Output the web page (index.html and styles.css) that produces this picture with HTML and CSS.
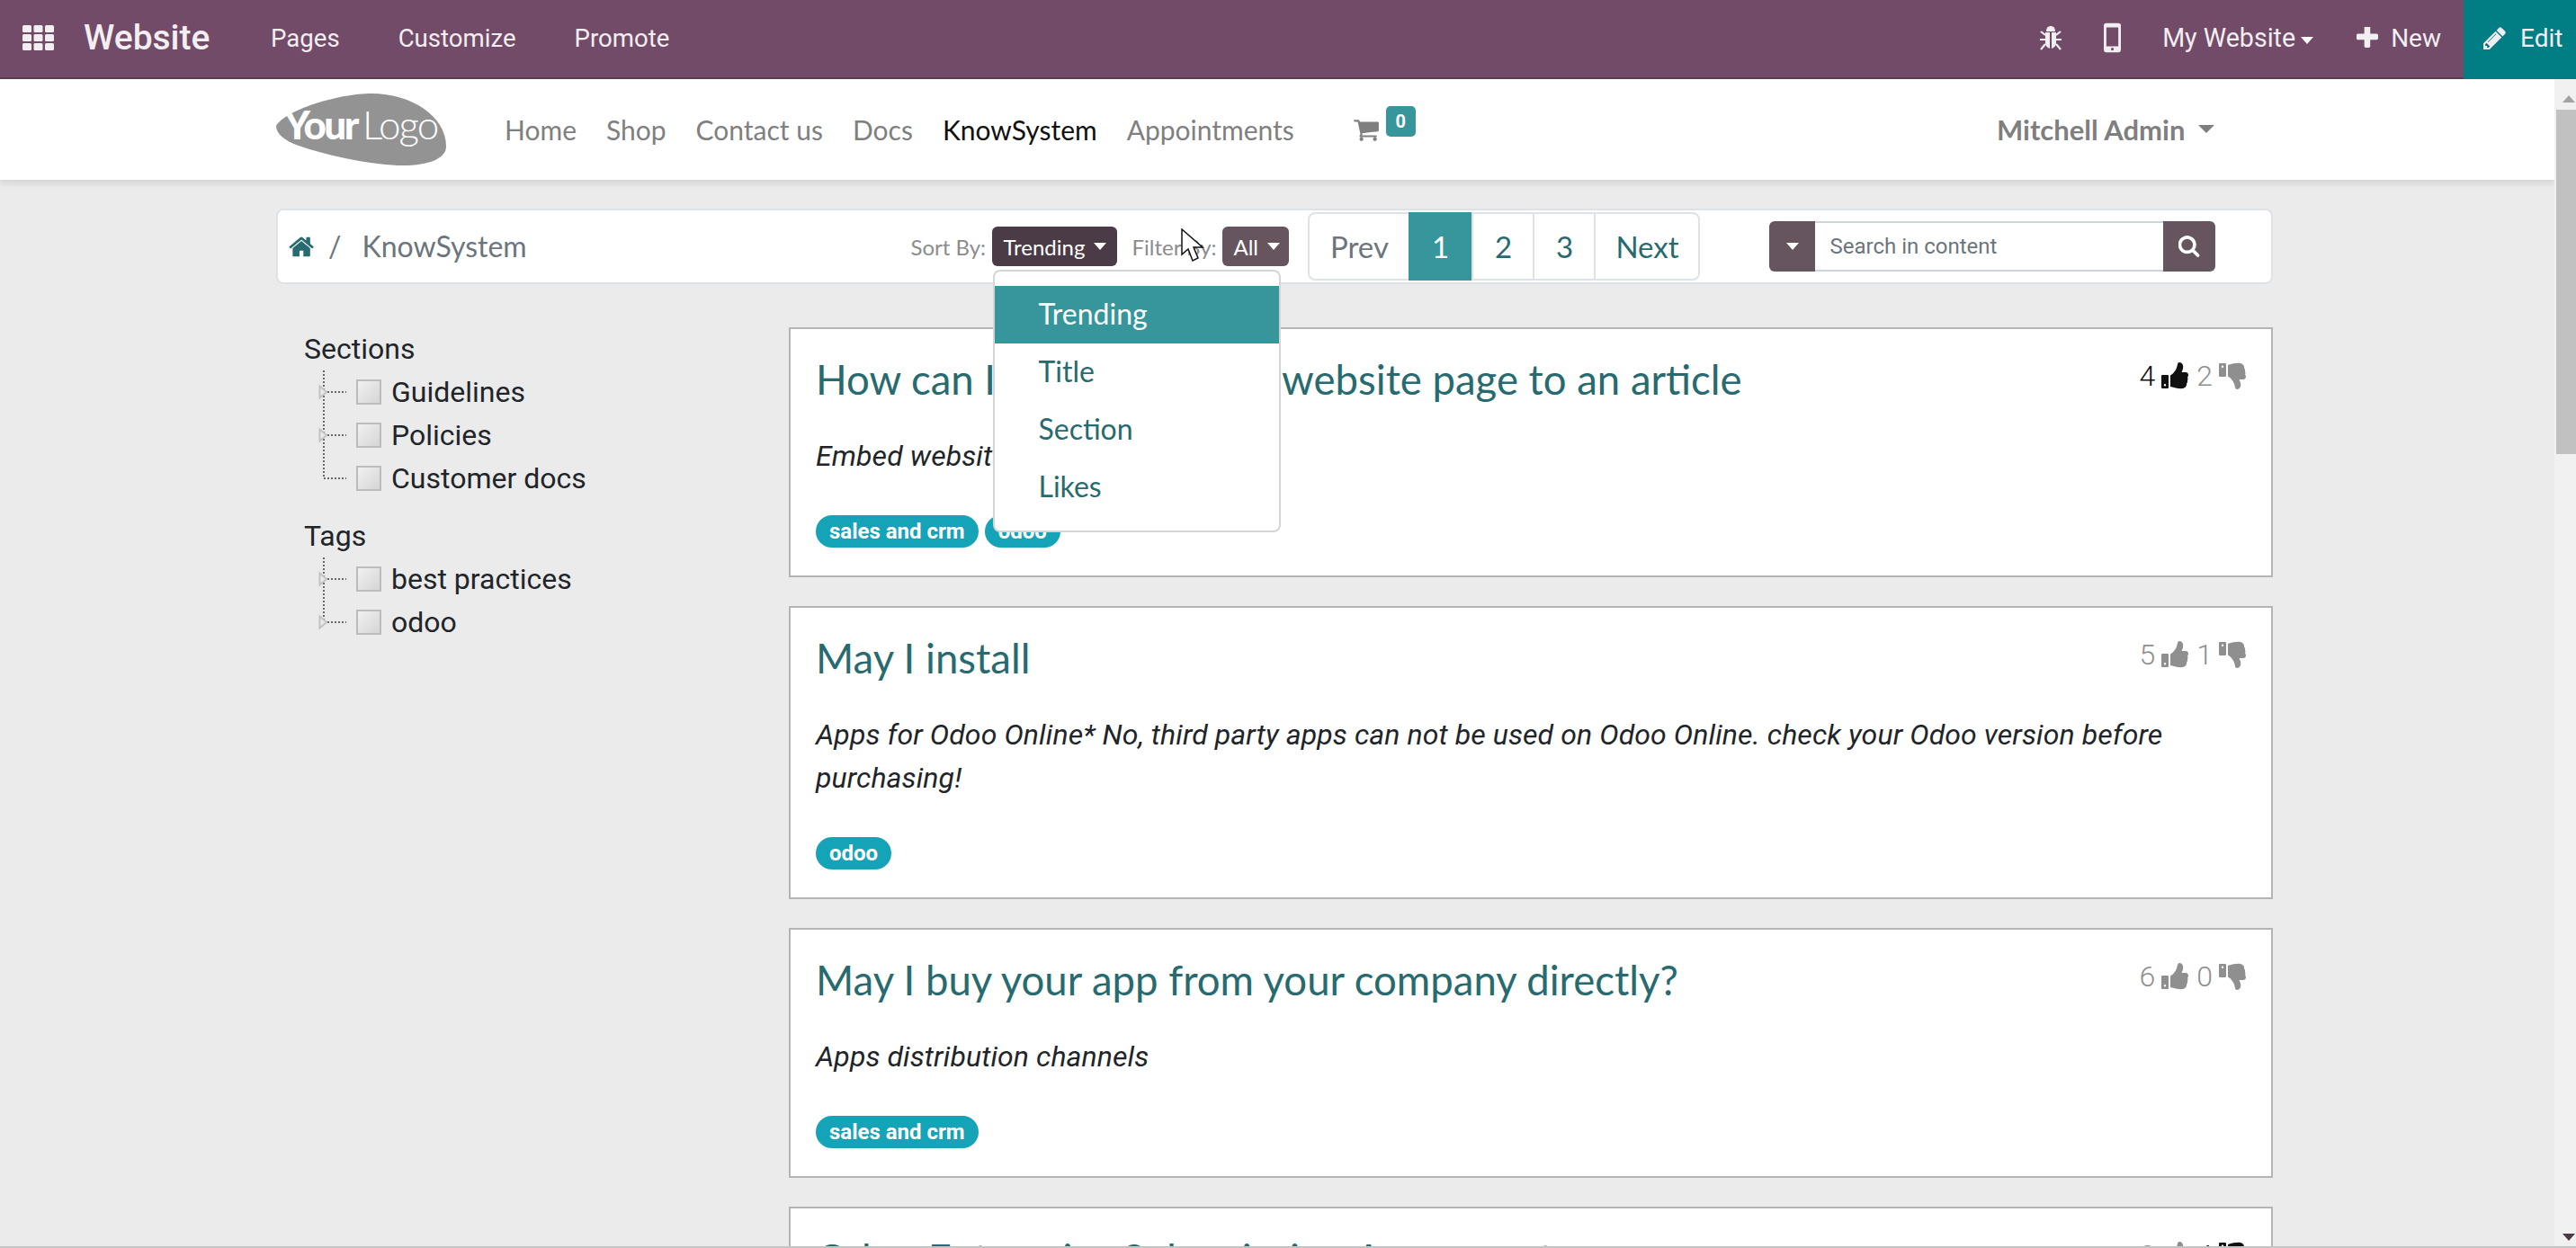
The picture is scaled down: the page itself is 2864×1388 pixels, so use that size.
FILE: index.html
```html
<!DOCTYPE html>
<html lang="en">
<head>
    <meta charset="UTF-8">
    <title>KnowSystem | My Website</title>
    <link rel="stylesheet" href="styles.css">
</head>
<body>
    <svg class="sprite" xmlns="http://www.w3.org/2000/svg">
        <symbol id="thumb-up" viewBox="0 0 30 30">
            <path fill-rule="evenodd" d="M1 14H7Q8 14 8 15V28Q8 29 7 29H1Q0 29 0 28V15Q0 14 1 14ZM4 24A1.200 1.200 0 1 0 4 26.400A1.200 1.200 0 1 0 4 24Z"/>
            <path d="M10 14.500C13 13 16 9 17 6C18 3 18 0 20 0C23 0 25 3 24 7C23.700 8.500 23 10 22.500 11H27C29 11 30 12.500 30 14C30 15.200 29.500 16 29 16.500C29.600 17.500 29.600 19 29 20C29.300 21.500 28.800 23 28 23.700C28.300 25.500 27.500 28 24 29C20 29.500 15 28.500 10 27Z"/>
        </symbol>
        <symbol id="thumb-down" viewBox="0 0 30 30">
            <g transform="matrix(1 0 0 -1 0 30)">
                <path fill-rule="evenodd" d="M1 14H7Q8 14 8 15V28Q8 29 7 29H1Q0 29 0 28V15Q0 14 1 14ZM4 24A1.200 1.200 0 1 0 4 26.400A1.200 1.200 0 1 0 4 24Z"/>
                <path d="M10 14.500C13 13 16 9 17 6C18 3 18 0 20 0C23 0 25 3 24 7C23.700 8.500 23 10 22.500 11H27C29 11 30 12.500 30 14C30 15.200 29.500 16 29 16.500C29.600 17.500 29.600 19 29 20C29.300 21.500 28.800 23 28 23.700C28.300 25.500 27.500 28 24 29C20 29.500 15 28.500 10 27Z"/>
            </g>
        </symbol>
        <symbol id="tree-node" viewBox="0 0 36 48">
            <path class="tree-dots" d="M6 0V48M6 24H31"/>
            <path class="tree-arrow" d="M1.500 17.500L9 24L1.500 30.500Z"/>
        </symbol>
        <symbol id="tree-end" viewBox="0 0 36 48">
            <path class="tree-dots" d="M6 0V24M6 24H31"/>
            <path class="tree-arrow" d="M1.500 17.500L9 24L1.500 30.500Z"/>
        </symbol>
        <symbol id="tree-plain" viewBox="0 0 36 48">
            <path class="tree-dots" d="M6 0V24H31"/>
        </symbol>
    </svg>

    <div class="topbar">
        <svg class="icon-grid" viewBox="0 0 35 28" fill="#f3eef2">
            <rect width="10" height="8" rx="1.500"/><rect x="12.500" width="10" height="8" rx="1.500"/><rect x="25" width="10" height="8" rx="1.500"/>
            <rect y="10" width="10" height="8" rx="1.500"/><rect x="12.500" y="10" width="10" height="8" rx="1.500"/><rect x="25" y="10" width="10" height="8" rx="1.500"/>
            <rect y="20" width="10" height="8" rx="1.500"/><rect x="12.500" y="20" width="10" height="8" rx="1.500"/><rect x="25" y="20" width="10" height="8" rx="1.500"/>
        </svg>
        <span class="brand">Website</span>
        <a class="top-link">Pages</a>
        <a class="top-link">Customize</a>
        <a class="top-link">Promote</a>
        <div class="top-right">
            <svg class="icon-bug" viewBox="0 0 26 28" fill="#f3eef2">
                <path d="M8 7C8 3 10 1 13 1S18 3 18 7Z"/>
                <path d="M7 8H12V26C9 25 7 23 7 20ZM14 8H19V20C19 23 17 25 14 26Z"/>
                <path d="M7 11L2 7M19 11L24 7M7 16H1M19 16H25M7 21L2 27M19 21L24 27" stroke="#f3eef2" stroke-width="2.200" fill="none"/>
            </svg>
            <svg class="icon-phone" viewBox="0 0 20 34">
                <path fill="#f3eef2" fill-rule="evenodd" d="M3 0H17Q20 0 20 3V31Q20 34 17 34H3Q0 34 0 31V3Q0 0 3 0ZM3 5V27H17V5ZM10 28.500A1.700 1.700 0 1 0 10 31.900A1.700 1.700 0 1 0 10 28.500Z"/>
            </svg>
            <span class="top-text my-site">My Website<i class="caret caret-top"></i></span>
            <svg class="icon-plus" viewBox="200 200 1400 1400"><path fill="#f3eef2" d="M1600 736v192q0 40-28 68t-68 28h-416v416q0 40-28 68t-68 28h-192q-40 0-68-28t-28-68v-416h-416q-40 0-68-28t-28-68v-192q0-40 28-68t68-28h416v-416q0-40 28-68t68-28h192q40 0 68 28t28 68v416h416q40 0 68 28t28 68z"/></svg>
            <span class="top-text top-new">New</span>
            <div class="edit-btn">
                <svg class="icon-pencil" viewBox="130 130 1530 1530"><path fill="#f3eef2" d="M491 1536l91-91-235-235-91 91v107h128v128h107zm523-928q0-22-22-22-10 0-17 7l-542 542q-7 7-7 17 0 22 22 22 10 0 17-7l542-542q7-7 7-17zm-54-192l416 416-832 832h-416v-416zm683 96q0 53-37 90l-166 166-416-416 166-165q36-38 90-38 53 0 91 38l235 234q37 39 37 91z"/></svg>
                <span>Edit</span>
            </div>
        </div>
    </div>

    <div class="viewport">
        <div class="page">
            <div class="site-header">
                <svg class="logo" viewBox="0 0 189 80">
                    <path fill="#939393" d="M0 36C10 18 70 0 106 0C150 0 189 25 189 59C189 72 170 80 141 80C110 80 60 70 25 58C8 52 0 44 0 36Z"/>
                    <text x="9" y="51" class="logo-your">Your</text>
                    <text x="96" y="51" class="logo-logo">Logo</text>
                </svg>
                <nav class="site-nav">
                    <a>Home</a>
                    <a>Shop</a>
                    <a>Contact us</a>
                    <a>Docs</a>
                    <a class="current">KnowSystem</a>
                    <a>Appointments</a>
                </nav>
                <div class="cart">
                    <svg class="icon-cart" viewBox="0 128 1792 1536"><path fill="#7f7f7f" d="M704 1536q0 52-38 90t-90 38-90-38-38-90 38-90 90-38 90 38 38 90zm896 0q0 52-38 90t-90 38-90-38-38-90 38-90 90-38 90 38 38 90zm128-1088v512q0 24-16.500 42.500t-40.500 21.500l-1044 122q13 60 13 70 0 16-24 64h920q26 0 45 19t19 45-19 45-45 19h-1024q-26 0-45-19t-19-45q0-11 8-31.500t16-36 21.500-40 15.500-29.500l-177-823h-204q-26 0-45-19t-19-45 19-45 45-19h256q16 0 28.500 6.500t19.500 15.500 13 24.500 8 26 5.500 29.500 4.500 26h1201q26 0 45 19t19 45z"/></svg>
                    <span class="cart-badge">0</span>
                </div>
                <div class="user">Mitchell Admin<i class="caret caret-user"></i></div>
            </div>

            <div class="container">
                <div class="toolbar">
                    <svg class="icon-home" viewBox="60 200 1660 1340"><path fill="#276a70" d="M1472 992v480q0 26-19 45t-45 19h-384v-384h-256v384h-384q-26 0-45-19t-19-45v-480q0-1 .5-3t.5-3l575-474 575 474q1 2 1 6zm223-69l-62 74q-8 9-21 11h-3q-13 0-21-7l-692-577-692 577q-12 8-24 7-13-2-21-11l-62-74q-8-10-7-23.500t11-21.500l719-599q32-26 76-26t76 26l244 204v-195q0-14 9-23t23-9h192q14 0 23 9t9 23v408l219 182q10 8 11 21.500t-7 23.500z"/></svg>
                    <span class="crumb-sep">/</span>
                    <span class="crumb">KnowSystem</span>

                    <span class="sort-label">Sort By:</span>
                    <div class="sort">
                        <button class="pick pick-open">Trending<i class="caret caret-white"></i></button>
                        <div class="menu">
                            <a class="menu-item selected">Trending</a>
                            <a class="menu-item">Title</a>
                            <a class="menu-item">Section</a>
                            <a class="menu-item">Likes</a>
                        </div>
                    </div>
                    <span class="sort-label filter-label">Filter By:</span>
                    <button class="pick pick-all">All<i class="caret caret-white"></i></button>

                    <div class="pager">
                        <a class="pg pg-prev">Prev</a>
                        <a class="pg pg-on">1</a>
                        <a class="pg">2</a>
                        <a class="pg">3</a>
                        <a class="pg pg-next">Next</a>
                    </div>

                    <div class="search">
                        <div class="search-drop"><i class="caret caret-white"></i></div>
                        <div class="search-input">Search in content</div>
                        <div class="search-go">
                            <svg class="icon-search" viewBox="120 120 1620 1680"><path fill="#fff" d="M1216 832q0-185-131.500-316.500t-316.500-131.500-316.500 131.500-131.500 316.500 131.500 316.500 316.500 131.500 316.500-131.500 131.500-316.500zm512 832q0 52-38 90t-90 38q-54 0-90-38l-343-342q-179 124-399 124-143 0-273.500-55.500t-225-150-150-225-55.500-273.500 55.500-273.500 150-225 225-150 273.500-55.500 273.500 55.500 225 150 150 225 55.500 273.500q0 220-124 399l343 343q37 37 37 90z"/></svg>
                        </div>
                    </div>
                </div>

                <div class="columns">
                    <aside class="sidebar">
                        <div class="tree-title">Sections</div>
                        <div class="tree-row"><svg class="tree-line"><use href="#tree-node"/></svg><span class="tree-box"></span>Guidelines</div>
                        <div class="tree-row"><svg class="tree-line"><use href="#tree-node"/></svg><span class="tree-box"></span>Policies</div>
                        <div class="tree-row"><svg class="tree-line"><use href="#tree-plain"/></svg><span class="tree-box"></span>Customer docs</div>
                        <div class="tree-title tree-title-next">Tags</div>
                        <div class="tree-row"><svg class="tree-line"><use href="#tree-node"/></svg><span class="tree-box"></span>best practices</div>
                        <div class="tree-row"><svg class="tree-line"><use href="#tree-end"/></svg><span class="tree-box"></span>odoo</div>
                    </aside>

                    <main class="articles">
                        <article class="card">
                            <div class="votes">
                                <span class="vote vote-on">4<svg class="thumb"><use href="#thumb-up"/></svg></span>
                                <span class="vote">2<svg class="thumb"><use href="#thumb-down"/></svg></span>
                            </div>
                            <h2 class="card-title">How can I add or attach a website page to an article</h2>
                            <p class="card-text">Embed website pages</p>
                            <div class="tags"><span class="tag">sales and crm</span><span class="tag">odoo</span></div>
                        </article>

                        <article class="card">
                            <div class="votes">
                                <span class="vote">5<svg class="thumb"><use href="#thumb-up"/></svg></span>
                                <span class="vote">1<svg class="thumb"><use href="#thumb-down"/></svg></span>
                            </div>
                            <h2 class="card-title">May I install</h2>
                            <p class="card-text">Apps for Odoo Online* No, third party apps can not be used on Odoo Online. check your Odoo version before purchasing!</p>
                            <div class="tags"><span class="tag">odoo</span></div>
                        </article>

                        <article class="card">
                            <div class="votes">
                                <span class="vote">6<svg class="thumb"><use href="#thumb-up"/></svg></span>
                                <span class="vote">0<svg class="thumb"><use href="#thumb-down"/></svg></span>
                            </div>
                            <h2 class="card-title">May I buy your app from your company directly?</h2>
                            <p class="card-text">Apps distribution channels</p>
                            <div class="tags"><span class="tag">sales and crm</span></div>
                        </article>

                        <article class="card">
                            <div class="votes">
                                <span class="vote">0<svg class="thumb"><use href="#thumb-up"/></svg></span>
                                <span class="vote vote-on">4<svg class="thumb"><use href="#thumb-down"/></svg></span>
                            </div>
                            <h2 class="card-title">Odoo Enterprise Subscription Agreement</h2>
                        </article>
                    </main>
                </div>
            </div>
        </div>

        <div class="scrollbar">
            <i class="scroll-up"></i>
            <div class="scroll-thumb"></div>
            <i class="scroll-down"></i>
        </div>
    </div>

    <svg class="pointer" viewBox="0 0 28 38">
        <path fill="#fff" stroke="#111" stroke-width="1.500" d="M1 1V29L8 23L13 36L19 33L14 21H24Z"/>
    </svg>
    <div class="window-edge"></div>
</body>
</html>
```
FILE: styles.css
```css
html, body {
    height: 100%;
    margin: 0;
    overflow: hidden;
}

body {
    display: flex;
    flex-direction: column;
    position: relative;
    font-family: Roboto, sans-serif;
    color: #111;
    background-color: #ebebeb;
}

a {
    text-decoration: none;
}

.sprite {
    display: none;
}

.caret {
    display: inline-block;
    width: 0;
    height: 0;
    border-left: 7px solid transparent;
    border-right: 7px solid transparent;
    border-top: 8px solid #fff;
}

/* top bar */
.topbar {
    display: flex;
    align-items: center;
    flex: none;
    height: 84px;
    padding: 0 0 2px 25px;
    background-color: #714b67;
    border-bottom: 2px solid #5a3c52;
    color: #f3eef2;
}

.icon-grid {
    width: 35px;
    height: 28px;
    margin-right: 33px;
}

.brand {
    width: 143px;
    margin-right: 65px;
    font-size: 39px;
    font-weight: 500;
}

.top-link {
    margin-right: 65px;
    font-size: 27.600px;
}

.top-right {
    display: flex;
    align-items: center;
    margin-left: auto;
    height: 84px;
}

.top-text {
    font-size: 28px;
}

.icon-bug {
    width: 26px;
    height: 28px;
    margin-right: 46px;
}

.icon-phone {
    width: 19px;
    height: 34px;
    margin-right: 46px;
}

.my-site {
    margin-right: 48px;
    font-size: 28.600px;
}

.caret-top {
    margin-left: 6px;
    vertical-align: 3px;
}

.icon-plus {
    width: 24px;
    height: 24px;
    margin-right: 14px;
}

.top-new {
    margin-right: 25px;
}

.edit-btn {
    display: flex;
    align-items: center;
    align-self: flex-start;
    width: 103px;
    height: 84px;
    padding: 0 0 4px 22px;
    background-color: #017e84;
    font-size: 28px;
}

.icon-pencil {
    width: 25px;
    height: 25px;
    margin-right: 16px;
}

/* page under the bar */
.viewport {
    display: flex;
    flex: 1;
    min-height: 0;
}

.page {
    flex: 1;
    min-width: 0;
    overflow: hidden;
}

.scrollbar {
    display: flex;
    flex-direction: column;
    width: 24px;
    padding-top: 18px;
    background-color: #f1f1f1;
}

.scroll-up {
    width: 0;
    height: 0;
    margin-left: 9px;
    border-left: 7px solid transparent;
    border-right: 7px solid transparent;
    border-bottom: 8px solid #a3a3a3;
}

.scroll-thumb {
    height: 383px;
    margin: 8px 0 0 2px;
    background-color: #c1c1c1;
}

.scroll-down {
    width: 0;
    height: 0;
    margin: auto 0 8px 9px;
    border-left: 7px solid transparent;
    border-right: 7px solid transparent;
    border-top: 8px solid #4a3b46;
}

/* site header */
.site-header {
    display: flex;
    align-items: center;
    position: relative;
    height: 112px;
    padding-left: 307px;
    background-color: #fff;
    box-shadow: 0 3px 8px rgba(0, 0, 0, 0.12);
}

.logo {
    width: 189px;
    height: 80px;
    margin-right: 65px;
}

.logo-your {
    font-family: Lato, sans-serif;
    font-size: 44px;
    font-weight: 900;
    letter-spacing: -2.500px;
    fill: #fff;
}

.logo-logo {
    font-family: Lato, sans-serif;
    font-size: 44px;
    font-weight: 300;
    letter-spacing: -2px;
    fill: #fff;
}

.site-nav {
    display: flex;
    gap: 33px;
    font-family: Lato, sans-serif;
    font-size: 30px;
    color: #7f7f7f;
}

.site-nav .current {
    color: #111;
}

.cart {
    display: flex;
    align-items: flex-start;
    align-self: flex-start;
    margin: 30px 0 0 65px;
}

.icon-cart {
    width: 30px;
    height: 26px;
    margin-top: 13px;
}

.cart-badge {
    width: 33px;
    height: 34px;
    margin-left: 7px;
    border-radius: 5px;
    background-color: #36969b;
    color: #fff;
    font-size: 20px;
    font-weight: 700;
    line-height: 34px;
    text-align: center;
}

.user {
    position: absolute;
    left: 2220px;
    font-family: Lato, sans-serif;
    font-size: 31px;
    font-weight: 700;
    color: #7f7f7f;
}

.caret-user {
    margin-left: 15px;
    vertical-align: 8px;
    border-left-width: 9px;
    border-right-width: 9px;
    border-top: 9px solid #7f7f7f;
}

/* toolbar */
.container {
    width: 2220px;
    margin: 32px 0 0 307px;
}

.toolbar {
    display: flex;
    align-items: center;
    height: 80px;
    padding-left: 12px;
    background-color: #fff;
    border: 2px solid #dee2e6;
    border-radius: 8px;
    font-family: Lato, sans-serif;
}

.icon-home {
    width: 28px;
    height: 24px;
}

.crumb-sep {
    margin: 0 0 2px 16px;
    font-size: 32px;
    color: #6c757d;
}

.crumb {
    width: 610px;
    margin: 0 0 2px 23px;
    font-size: 32px;
    color: #6c757d;
}

.sort-label {
    width: 91px;
    font-size: 24px;
    color: #8c8c8c;
}

.filter-label {
    width: 101px;
    margin-left: 16px;
}

.sort {
    position: relative;
}

.pick {
    display: flex;
    align-items: center;
    height: 44px;
    padding: 0 12px;
    border: none;
    border-radius: 6px;
    color: #fff;
    font-family: Lato, sans-serif;
    font-size: 24px;
}

.pick .caret {
    margin-left: 10px;
}

.pick-open {
    width: 139px;
    background-color: #4a3b46;
}

.pick-all {
    width: 74px;
    background-color: #66545f;
}

.menu {
    position: absolute;
    top: 48px;
    left: 1px;
    z-index: 5;
    width: 316px;
    padding: 16px 0;
    background-color: #fff;
    border: 2px solid #d5d5d5;
    border-radius: 8px;
}

.menu-item {
    display: block;
    height: 64px;
    padding-left: 48px;
    color: #276a70;
    font-size: 32px;
    line-height: 62px;
}

.menu-item.selected {
    background-color: #36969b;
    color: #fff;
}

.pager {
    display: flex;
    height: 72px;
    margin-left: 21px;
    background-color: #fff;
    border: 2px solid #dee2e6;
    border-radius: 8px;
    font-size: 33px;
    color: #276a70;
}

.pg {
    display: flex;
    align-items: center;
    justify-content: center;
    width: 66px;
    border-left: 2px solid #dee2e6;
}

.pg-prev {
    width: 110px;
    border-left: none;
    color: #6c757d;
}

.pg-on {
    width: 70px;
    margin: -2px 0;
    border-left: none;
    background-color: #36969b;
    color: #fff;
}

.pg-next {
    width: 114px;
}

.search {
    display: flex;
    height: 56px;
    margin-left: 77px;
    font-family: Roboto, sans-serif;
}

.search-drop {
    display: flex;
    align-items: center;
    justify-content: center;
    width: 51px;
    background-color: #66545f;
    border-radius: 6px 0 0 6px;
}

.search-input {
    width: 371px;
    padding-left: 16px;
    background-color: #fff;
    border-top: 2px solid #ced4da;
    border-bottom: 2px solid #ced4da;
    color: #6c757d;
    font-size: 24px;
    line-height: 52px;
}

.search-go {
    display: flex;
    align-items: center;
    justify-content: center;
    width: 58px;
    background-color: #66545f;
    border-radius: 0 6px 6px 0;
}

.icon-search {
    width: 24px;
    height: 24px;
}

/* sidebar and list */
.columns {
    display: flex;
    margin-top: 48px;
}

.sidebar {
    width: 570px;
    flex: none;
    padding-left: 31px;
    box-sizing: border-box;
    font-size: 32px;
    line-height: 48px;
    color: #212529;
}

.tree-title-next {
    margin-top: 16px;
}

.tree-row {
    display: flex;
    align-items: center;
    height: 48px;
}

.tree-line {
    width: 36px;
    height: 48px;
    margin: 0 6px 0 16px;
}

.tree-dots {
    fill: none;
    stroke: #666;
    stroke-width: 2;
    stroke-dasharray: 2 2;
}

.tree-arrow {
    fill: #ebebeb;
    stroke: #c2c2c2;
    stroke-width: 2;
}

.tree-box {
    width: 24px;
    height: 24px;
    margin-right: 11px;
    border: 2px solid #bcbcbc;
    background: linear-gradient(135deg, #f0f0f0, #d6d6d6);
}

.articles {
    flex: 1;
    min-width: 0;
}

.card {
    position: relative;
    margin-bottom: 32px;
    padding: 27px 28px 31px;
    background-color: #fff;
    border: 2px solid #b4b4b4;
}

.card-title {
    margin: 0 0 32px;
    font-family: Lato, sans-serif;
    font-size: 45.500px;
    font-weight: 400;
    line-height: 58px;
    color: #276a70;
}

.card-text {
    margin: 0 0 42px;
    font-size: 32px;
    font-style: italic;
    line-height: 48px;
    letter-spacing: 0.100px;
    color: #212529;
}

.tags {
    display: flex;
    gap: 7px;
}

.tag {
    height: 36px;
    padding: 0 15px;
    border-radius: 18px;
    background-color: #15a3b7;
    color: #fff;
    font-size: 24px;
    font-weight: 700;
    line-height: 36px;
}

.votes {
    position: absolute;
    top: 33px;
    right: 28px;
    display: flex;
    gap: 9px;
}

.vote {
    display: flex;
    align-items: center;
    gap: 7px;
    font-size: 32px;
    font-weight: 300;
    color: #8f8f8f;
}

.vote-on {
    color: #111;
}

.thumb {
    width: 30px;
    height: 30px;
    fill: currentColor;
}

/* things over the page */
.pointer {
    position: absolute;
    left: 1313px;
    top: 254px;
    z-index: 9;
    width: 28px;
    height: 38px;
}

.window-edge {
    position: absolute;
    left: 0;
    right: 0;
    bottom: 0;
    height: 2px;
    background-color: #c4c4c4;
}
```
